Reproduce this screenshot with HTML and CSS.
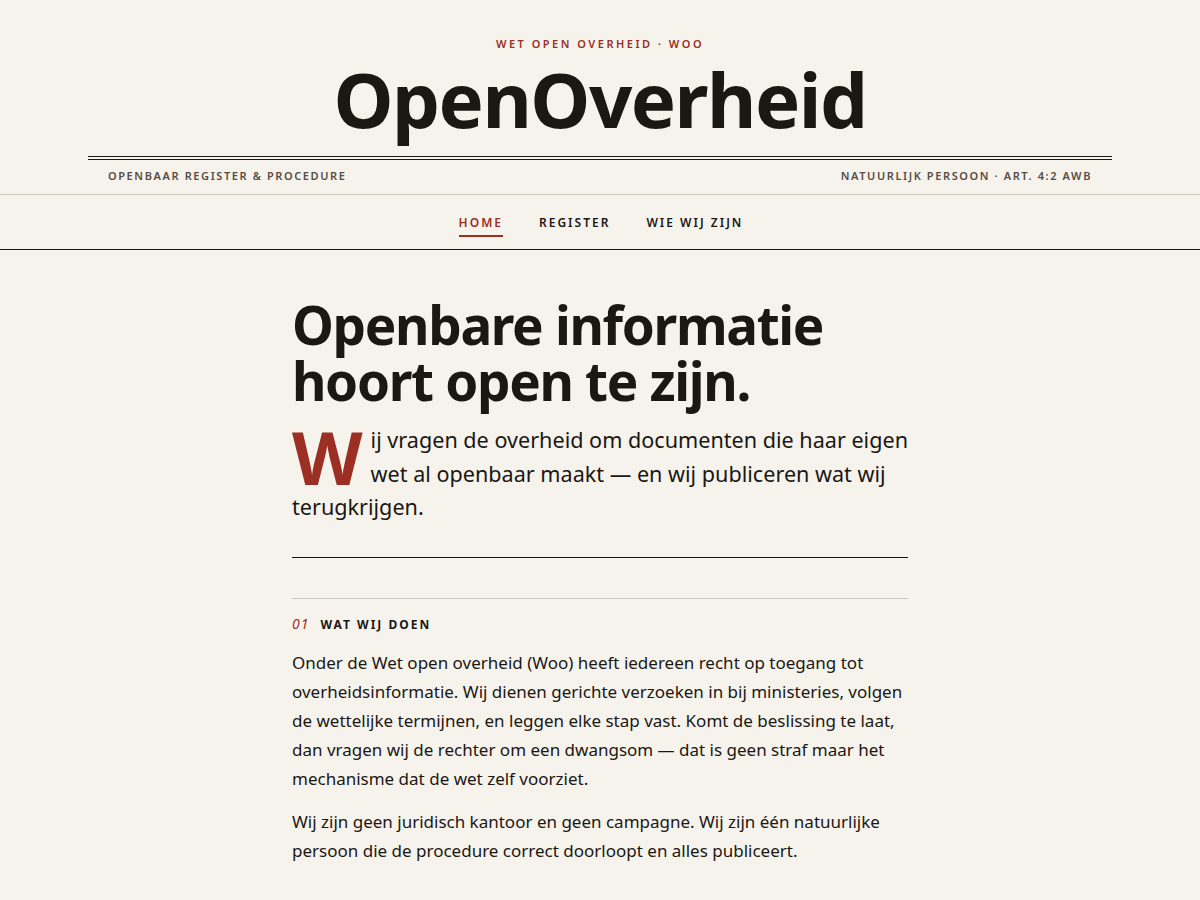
FILE: index.html
```html
<!DOCTYPE html>
<html lang="nl">
<head>
<meta charset="utf-8">
<title>OpenOverheid</title>
<link rel="stylesheet" href="styles.css">
</head>
<body>
<header class="masthead">
  <div class="masthead-inner">
    <p class="kicker">Wet open overheid · Woo</p>
    <h1 class="brand">OpenOverheid</h1>
    <div class="double-rule"></div>
    <div class="meta">
      <span>Openbaar register &amp; procedure</span>
      <span>Natuurlijk persoon · Art. 4:2 Awb</span>
    </div>
  </div>
</header>
<nav class="nav">
  <a class="nav-link active" href="#">Home</a>
  <a class="nav-link" href="#">Register</a>
  <a class="nav-link" href="#">Wie wij zijn</a>
</nav>
<main class="content">
  <h2 class="headline">Openbare informatie hoort open te zijn.</h2>
  <p class="lead"><span class="dropcap">W</span>ij vragen de overheid om documenten die haar eigen wet al openbaar maakt — en wij publiceren wat wij terugkrijgen.</p>
  <hr class="rule">
  <section class="section">
    <h3 class="section-title"><span class="num">01</span>Wat wij doen</h3>
    <p>Onder de Wet open overheid (Woo) heeft iedereen recht op toegang tot overheidsinformatie. Wij dienen gerichte verzoeken in bij ministeries, volgen de wettelijke termijnen, en leggen elke stap vast. Komt de beslissing te laat, dan vragen wij de rechter om een dwangsom — dat is geen straf maar het mechanisme dat de wet zelf voorziet.</p>
    <p>Wij zijn geen juridisch kantoor en geen campagne. Wij zijn één natuurlijke persoon die de procedure correct doorloopt en alles publiceert.</p>
  </section>
</main>
</body>
</html>
```
FILE: styles.css
```css
* { box-sizing: border-box; }
html, body { margin: 0; padding: 0; }
body {
  background: #f6f3ed;
  color: #1b1713;
  font-family: "Noto Sans", "Open Sans", sans-serif;
}
.masthead-inner {
  width: 1024px;
  margin: 0 auto;
  padding-top: 37px;
}
.kicker {
  margin: 0;
  text-align: center;
  font-size: 11px;
  font-weight: 600;
  letter-spacing: 2.5px;
  text-transform: uppercase;
  color: #9b2f23;
  line-height: 14px;
}
.brand {
  margin: 0;
  text-align: center;
  font-size: 76px;
  font-weight: 700;
  line-height: 96px;
  letter-spacing: -0.02em;
  color: #1b1713;
}
.double-rule {
  margin-top: 9px;
  height: 4px;
  border-top: 1px solid #1b1713;
  border-bottom: 1px solid #1b1713;
}
.meta {
  display: flex;
  justify-content: space-between;
  padding: 8px 20px 11px;
  font-size: 11px;
  font-weight: 600;
  letter-spacing: 1.6px;
  text-transform: uppercase;
  color: #564d44;
  line-height: 15px;
}
.nav {
  border-top: 1px solid #cfc8bc;
  border-bottom: 1px solid #1b1713;
  display: flex;
  justify-content: center;
  gap: 36px;
  padding: 20px 0 12px 2px;
}
.nav-link {
  font-size: 12px;
  font-weight: 600;
  letter-spacing: 2px;
  text-transform: uppercase;
  text-decoration: none;
  color: #1b1713;
  line-height: 16px;
  padding-bottom: 4px;
  border-bottom: 2px solid transparent;
}
.nav-link.active {
  color: #9b2f23;
  border-bottom-color: #9b2f23;
}
.content {
  width: 616px;
  margin: 0 auto;
  padding-top: 47px;
  padding-bottom: 40px;
}
.headline {
  margin: 0;
  font-size: 53px;
  font-weight: 700;
  line-height: 56px;
  letter-spacing: -0.025em;
  color: #1b1713;
}
.lead {
  margin: 14px 0 0;
  font-size: 21.6px;
  line-height: 33.5px;
  color: #1b1713;
}
.dropcap {
  float: left;
  font-size: 73px;
  line-height: 56px;
  height: 58px;
  font-weight: 700;
  color: #9b2f23;
  margin: 6px 8px 0 0;
}
.rule {
  margin: 33px 0 0;
  border: 0;
  border-top: 1px solid #1b1713;
}
.section {
  margin-top: 40px;
  border-top: 1px solid #cfc8bc;
  padding-top: 16px;
}
.section-title {
  margin: 0 0 14px;
  font-size: 12px;
  font-weight: 700;
  letter-spacing: 2px;
  text-transform: uppercase;
  line-height: 18px;
  display: flex;
  align-items: baseline;
}
.num {
  font-style: italic;
  font-weight: 400;
  font-size: 14px;
  letter-spacing: 1px;
  color: #9b2f23;
  margin-right: 11px;
}
.section p {
  margin: 0 0 14px;
  font-size: 17px;
  line-height: 29px;
}
```
